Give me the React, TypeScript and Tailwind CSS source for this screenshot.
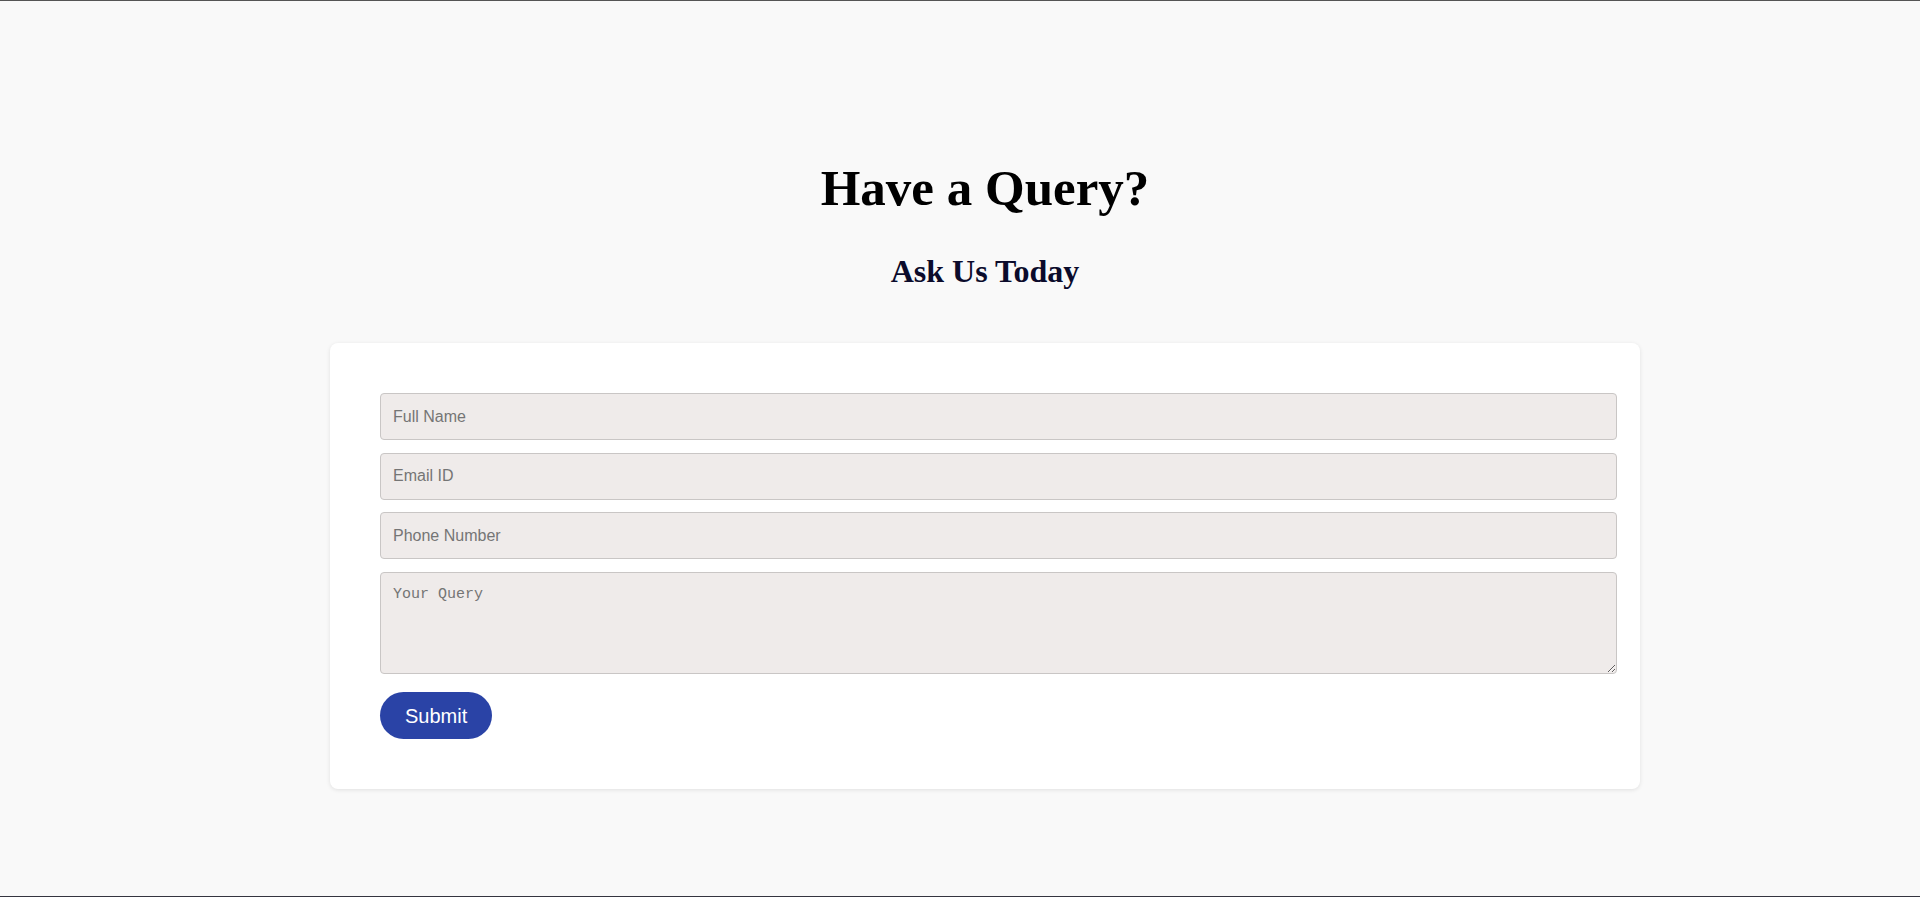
import React from "react";

export default function App() {
  const inputCls =
    "block w-[calc(100%+27px)] h-[47px] box-border rounded-[4px] border border-[#c9c6c5] bg-[#efebea] px-[12px] text-[16px] text-[#333] placeholder:text-[#757575] outline-none";
  return (
    <div className="h-[897px] box-border overflow-hidden border-t border-b border-t-[#555555] border-b-[#34343f] bg-[#f9f9f9] pl-[50px] pt-[157px]">
      <div className="flex flex-col items-center">
        <h1 className="m-0 text-[51px] leading-[60px] font-bold text-black" style={{ fontFamily: '"Liberation Serif", "DejaVu Serif", serif' }}>
          Have a Query?
        </h1>
        <h2 className="mt-[33px] text-[32px] leading-[40px] font-bold text-[#0b0b2b]" style={{ fontFamily: '"Liberation Serif", "DejaVu Serif", serif' }}>
          Ask Us Today
        </h2>
        <div className="mt-[52px] w-[1310px] box-border rounded-[8px] bg-white p-[50px] shadow-[0_1px_4px_rgba(0,0,0,0.1)]">
          <form className="flex flex-col gap-[12.5px]" style={{ fontFamily: '"Liberation Sans", Arial, sans-serif' }} onSubmit={(e) => e.preventDefault()}>
            <input className={inputCls} placeholder="Full Name" />
            <input className={inputCls} placeholder="Email ID" />
            <input className={inputCls} placeholder="Phone Number" />
            <textarea
              className="block w-[calc(100%+27px)] h-[102px] box-border rounded-[4px] border border-[#c9c6c5] bg-[#efebea] px-[12px] py-[13px] text-[15px] leading-[18px] text-[#333] placeholder:text-[#757575] outline-none"
              style={{ fontFamily: '"Liberation Mono", "DejaVu Sans Mono", monospace' }}
              placeholder="Your Query"
            />
            <div className="mt-[6px]">
              <button
                type="submit"
                className="h-[47px] rounded-full bg-[#2a43a6] px-[25px] text-[20px] text-white"
              >
                Submit
              </button>
            </div>
          </form>
        </div>
      </div>
    </div>
  );
}
